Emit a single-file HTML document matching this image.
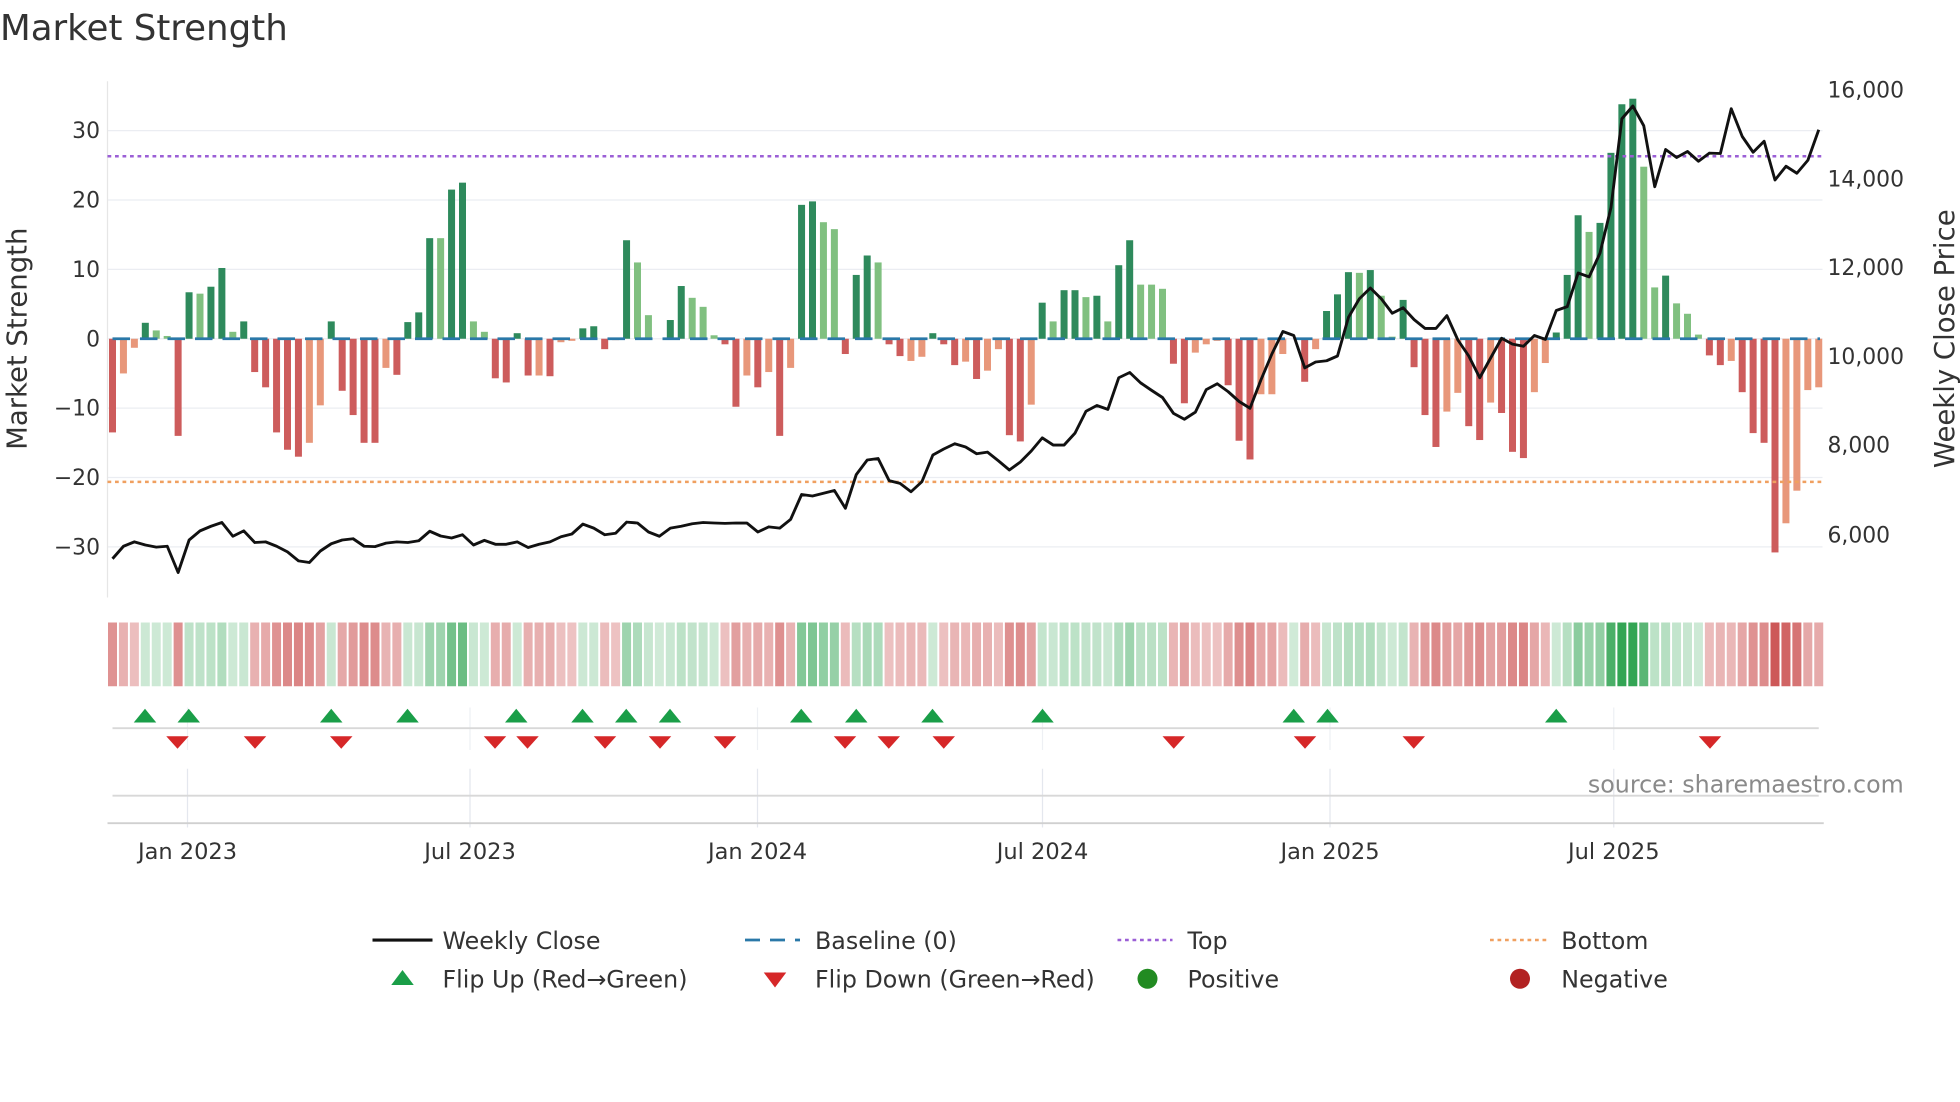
<!DOCTYPE html>
<html><head><meta charset="utf-8">
<style>
html,body{margin:0;padding:0;background:#fff;}
svg{display:block;}
text{font-family:"DejaVu Sans","Liberation Sans",sans-serif;fill:#333;}
</style></head>
<body>
<svg id="s" width="1960" height="1102" viewBox="0 0 1568 881.6" xmlns="http://www.w3.org/2000/svg">
<text x="0" y="32" font-size="28.5">Market Strength</text>
</svg>
<script>
const S=document.getElementById('s');
let h='';
const bars=[[-13.5,'R'],[-5,'r'],[-1.3,'r'],[2.3,'G'],[1.2,'g'],[0.4,'g'],[-14,'R'],[6.7,'G'],[6.5,'g'],[7.5,'G'],[10.2,'G'],[1,'g'],[2.5,'G'],[-4.8,'R'],[-7,'R'],[-13.5,'R'],[-16,'R'],[-17,'R'],[-15,'r'],[-9.6,'r'],[2.5,'G'],[-7.5,'R'],[-11,'R'],[-15,'R'],[-15,'R'],[-4.2,'r'],[-5.2,'R'],[2.4,'G'],[3.8,'G'],[14.5,'G'],[14.5,'g'],[21.5,'G'],[22.5,'G'],[2.5,'g'],[1,'g'],[-5.7,'R'],[-6.3,'R'],[0.8,'G'],[-5.3,'R'],[-5.3,'r'],[-5.4,'R'],[-0.5,'r'],[-0.3,'r'],[1.5,'G'],[1.8,'G'],[-1.5,'R'],[-0.2,'r'],[14.2,'G'],[11,'g'],[3.4,'g'],[0,'g'],[2.7,'G'],[7.6,'G'],[5.9,'g'],[4.6,'g'],[0.5,'g'],[-0.8,'R'],[-9.8,'R'],[-5.3,'r'],[-7,'R'],[-4.8,'r'],[-14,'R'],[-4.2,'r'],[19.3,'G'],[19.8,'G'],[16.8,'g'],[15.8,'g'],[-2.2,'R'],[9.2,'G'],[12,'G'],[11,'g'],[-0.8,'R'],[-2.5,'R'],[-3.2,'r'],[-2.6,'r'],[0.8,'G'],[-0.8,'R'],[-3.8,'R'],[-3.3,'r'],[-5.8,'R'],
[-4.6,'r'],[-1.5,'r'],[-13.9,'R'],[-14.8,'R'],[-9.5,'r'],[5.2,'G'],[2.5,'g'],[7,'G'],[7,'G'],[6,'g'],[6.2,'G'],[2.5,'g'],[10.6,'G'],[14.2,'G'],[7.8,'g'],[7.8,'g'],[7.2,'g'],[-3.6,'R'],[-9.3,'R'],[-2,'r'],[-0.8,'r'],[-0.3,'r'],[-6.7,'R'],[-14.7,'R'],[-17.4,'R'],[-8,'r'],[-8,'r'],[-2.2,'r'],[0,'g'],[-6.2,'R'],[-1.5,'r'],[4,'G'],[6.4,'G'],[9.6,'G'],[9.5,'g'],[9.9,'G'],[6.2,'g'],[0.3,'g'],[5.6,'G'],[-4.1,'R'],[-11,'R'],[-15.6,'R'],[-10.5,'r'],[-7.8,'r'],[-12.6,'R'],[-14.6,'R'],[-9.2,'r'],[-10.7,'R'],[-16.3,'R'],[-17.2,'R'],[-7.7,'r'],[-3.5,'r'],[0.9,'G'],[9.2,'G'],[17.8,'G'],[15.4,'g'],[16.7,'G'],[26.8,'G'],[33.8,'G'],[34.6,'G'],[24.8,'g'],[7.4,'g'],[9.1,'G'],[5.1,'g'],[3.6,'g'],[0.6,'g'],[-2.4,'R'],[-3.8,'R'],[-3.2,'r'],[-7.7,'R'],[-13.6,'R'],[-15,'R'],[-30.8,'R'],[-26.6,'r'],[-21.9,'r'],[-7.4,'r'],[-7,'r']];
const py=[447,437,433.5,436,437.7,437,458,432,424.7,421,418,429,424.7,434,433.5,437,441.5,448.7,450,440.8,435,432,431,437,437.3,434.5,433.5,434,432.6,425,428.8,430.4,427.8,436,432.3,435.4,435.4,433.5,438,435.4,433.5,429.4,427.2,419.3,422.5,427.8,426.6,417.7,418.4,425.6,429,422.5,421,419,418,418.4,418.7,418.4,418.4,425.6,421.5,422.5,415.5,395.6,396.8,394.6,392.4,406.6,379.7,368,366.8,384.5,386.7,393.4,385.4,364,359.2,355,357.6,
363,361.7,368.7,376,369.6,360.8,350.3,356,356,346.5,329,324.4,327.5,302.2,298,306.3,312.3,318,330.7,335.4,329.7,311.7,307,313.3,321.2,326.6,303.8,283.2,265.2,268.4,294.3,289.6,288.6,284.8,253.8,239,230.4,239,250.6,246.2,255.7,262.7,262.7,252.5,272,284.8,302.2,286.4,270.6,275.3,277,268.4,271.5,248.4,245.3,218.4,221.5,202.5,166,95,84.8,100.6,149.4,119.6,126,121.2,129,122.5,122.8,87,109.2,121.8,113,144,133,138.6,128.2,103.8];
const N=bars.length, x0=90, x1=1455, dx=(x1-x0)/(N-1);
const X=i=>x0+dx*i, Y=v=>271-5.55*v;
const pdx=(x1-x0)/(py.length-1);
[30,20,10,0,-10,-20,-30].forEach(v=>{h+=`<line x1="86" x2="1458" y1="${Y(v)}" y2="${Y(v)}" stroke="#ebedf2" stroke-width="1"/>`;
h+=`<text x="80" y="${Y(v)+6}" font-size="17.5" text-anchor="end">${v<0?'−'+(-v):v}</text>`;});
[[16000,72],[14000,143],[12000,214],[10000,285],[8000,356],[6000,428]].forEach(([p,y])=>{h+=`<text x="1462" y="${y+6}" font-size="17.5">${p.toLocaleString('en-US')}</text>`;});
h+=`<line x1="86" x2="86" y1="65" y2="478" stroke="#e6e6e6"/>`;
h+=`<text transform="translate(21,271) rotate(-90)" font-size="22" text-anchor="middle">Market Strength</text>`;
h+=`<text transform="translate(1563,271) rotate(-90)" font-size="22" text-anchor="middle">Weekly Close Price</text>`;
const col={G:'#2e8a5c',g:'#80c080',R:'#cd5c5c',r:'#e8977a'};
bars.forEach(([v,c],i)=>{const y=Y(v);h+=`<rect x="${X(i)-2.8}" y="${Math.min(y,271)}" width="5.6" height="${Math.abs(271-y)}" fill="${col[c]}"/>`;});
h+=`<line x1="90" x2="1456" y1="271" y2="271" stroke="#2a78a8" stroke-width="2.2" stroke-dasharray="14,8"/>`;
h+=`<line x1="86" x2="1458" y1="125" y2="125" stroke="#9b5fd6" stroke-width="2" stroke-dasharray="3,3"/>`;
h+=`<line x1="86" x2="1458" y1="385.5" y2="385.5" stroke="#f0a060" stroke-width="2" stroke-dasharray="3,3"/>`;
h+=`<polyline fill="none" stroke="#111" stroke-width="2.3" stroke-linejoin="round" points="${py.map((y,i)=>(x0+pdx*i).toFixed(1)+','+y).join(' ')}"/>`;
bars.forEach(([v],i)=>{const a=Math.min(1,0.18+Math.abs(v)/36);const c=v>=0?`rgba(40,160,75,${(0.2+0.75*a*a).toFixed(2)})`:`rgba(200,70,70,${(0.2+0.7*a).toFixed(2)})`;
h+=`<rect x="${X(i)-3.6}" y="498" width="7.2" height="51" fill="${c}"/>`;});
[150,376,606,834,1064,1291].forEach(x=>{h+=`<line x1="${x}" x2="${x}" y1="566" y2="600" stroke="#eef0f4"/><line x1="${x}" x2="${x}" y1="615" y2="662" stroke="#e4e7ee"/>`;});
h+=`<line x1="90" x2="1455" y1="582.5" y2="582.5" stroke="#d8d8d8" stroke-width="1.5"/>`;
h+=`<line x1="90" x2="1455" y1="636.5" y2="636.5" stroke="#d8d8d8" stroke-width="1.5"/>`;
h+=`<line x1="86" x2="1459" y1="658.5" y2="658.5" stroke="#d0d0d0" stroke-width="1.5"/>`;
[116,151,265,326,413,466,501,536,641,685,746,834,1035,1062,1245].forEach(x=>{h+=`<polygon points="${x-9},578 ${x+9},578 ${x},567" fill="#1a9e48"/>`;});
[142,204,273,396,422,484,528,580,676,711,755,939,1044,1131,1368].forEach(x=>{h+=`<polygon points="${x-9},589 ${x+9},589 ${x},599" fill="#d62728"/>`;});
h+=`<text x="1523" y="634" font-size="19" text-anchor="end" style="fill:#8a8a8a">source: sharemaestro.com</text>`;
[['Jan 2023',150],['Jul 2023',376],['Jan 2024',606],['Jul 2024',834],['Jan 2025',1064],['Jul 2025',1291]].forEach(([t,x])=>{h+=`<text x="${x}" y="687" font-size="18" text-anchor="middle">${t}</text>`;});
const L=(x,y,t)=>`<text x="${x}" y="${y+7}" font-size="19">${t}</text>`;
h+=`<line x1="298" x2="346" y1="752" y2="752" stroke="#111" stroke-width="2.5"/>`+L(354,752,'Weekly Close');
h+=`<line x1="596" x2="640" y1="752" y2="752" stroke="#2a78a8" stroke-width="2.2" stroke-dasharray="12,8"/>`+L(652,752,'Baseline (0)');
h+=`<line x1="894" x2="938" y1="752" y2="752" stroke="#9b5fd6" stroke-width="2" stroke-dasharray="3,3"/>`+L(950,752,'Top');
h+=`<line x1="1192" x2="1238" y1="752" y2="752" stroke="#f0a060" stroke-width="2" stroke-dasharray="3,3"/>`+L(1249,752,'Bottom');
h+=`<polygon points="313,788 331,788 322,776" fill="#1a9e48"/>`+L(354,783,'Flip Up (Red→Green)');
h+=`<polygon points="611,778 629,778 620,790" fill="#d62728"/>`+L(652,783,'Flip Down (Green→Red)');
h+=`<circle cx="918" cy="783" r="8" fill="#228b22"/>`+L(950,783,'Positive');
h+=`<circle cx="1216" cy="783" r="8" fill="#b22222"/>`+L(1249,783,'Negative');
S.insertAdjacentHTML('beforeend',h);
</script>
</body></html>
